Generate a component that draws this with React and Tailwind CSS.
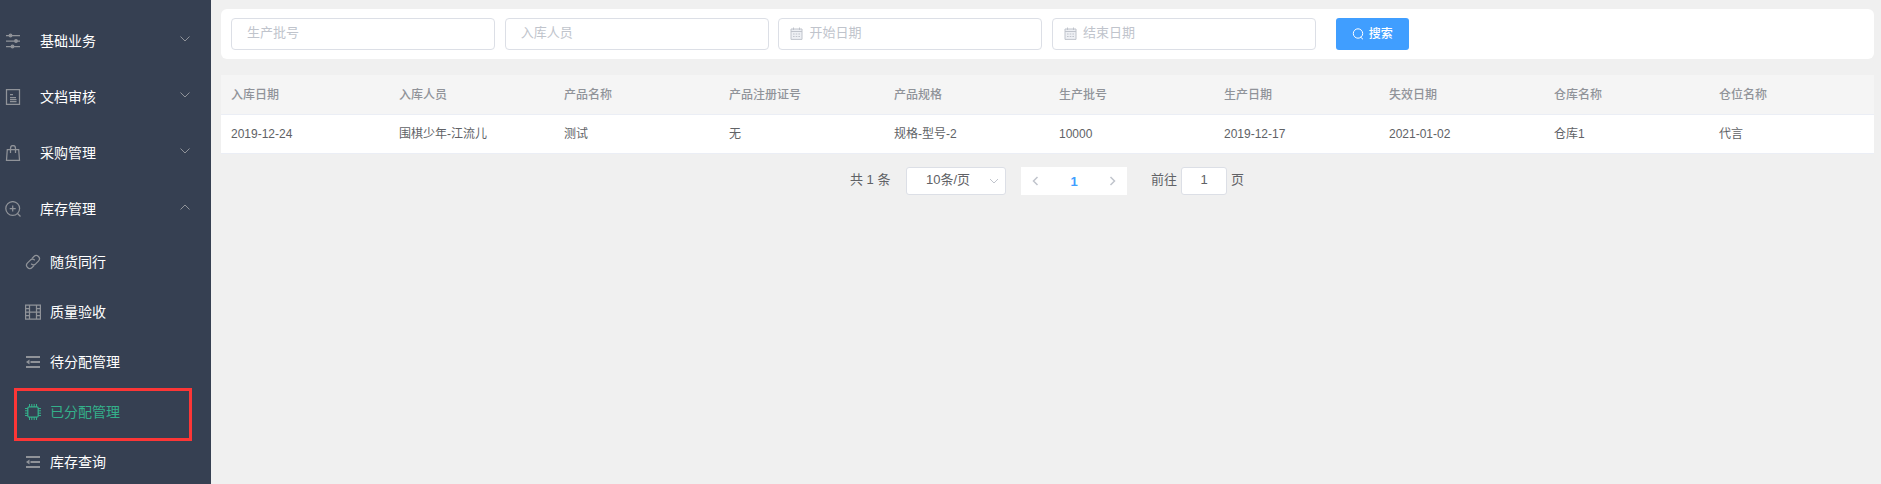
const FONT =
  "font-['Liberation_Sans','Noto_Sans_CJK_SC',sans-serif]";

const ICONS = {
  operation: (
    <>
      <path d="M1 2.500H15M1 8H15M1 13.500H15" />
      <circle cx="5.500" cy="2.500" r="1.300" fill="currentColor" />
      <circle cx="11" cy="8" r="1.300" fill="currentColor" />
      <circle cx="7.500" cy="13.500" r="1.300" fill="currentColor" />
    </>
  ),
  document: (
    <path d="M1.500 .6H14.500V15.400H1.500ZM5 5.500H8M5 8.500H11M5 10.500H11.500M5 12.500H11.500" />
  ),
  bag: (
    <path d="M2.300 4.500H13.700L14.500 15.300H1.500ZM5.500 8V3.500C5.500 -.4 10.500 -.4 10.500 3.500V8" />
  ),
  zoomIn: (
    <>
      <circle cx="7.700" cy="7.500" r="6.900" />
      <path d="M12.500 12.500L15.500 15.500M4.700 7.500H10.700M7.700 4.500V10.500" />
    </>
  ),
  link: (
    <g transform="rotate(-45 8 8)">
      <path d="M6.500 11.200H3.500A3.200 3.200 0 0 1 3.500 4.800H7.500A3.200 3.200 0 0 1 10.500 8" />
      <path d="M9.500 4.800H12.500A3.200 3.200 0 0 1 12.500 11.200H8.500A3.200 3.200 0 0 1 5.500 8" />
    </g>
  ),
  film: (
    <path d="M.6 1H15.400V15H.6ZM4.500 1V15M11.500 1V15M4.500 8H11.500M.5 4.500H4.500M.5 8H4.500M.5 11.500H4.500M11.500 4.500H15.500M11.500 8H15.500M11.500 11.500H15.500" />
  ),
  fold: (
    <>
      <path strokeWidth="2" d="M1 3H15M5.500 8H15M1 13H15" />
      <path d="M1 8L4.500 5.500V10.500Z" fill="currentColor" stroke="none" />
    </>
  ),
  cpu: (
    <>
      <rect x="2.800" y="2.800" width="10.400" height="10.400" rx="1.500" />
      <path
        strokeWidth="1"
        d="M4.500 0V3M6.800 0V3M9.200 0V3M11.500 0V3M4.500 13V16M6.800 13V16M9.200 13V16M11.500 13V16M0 4.500H3M0 6.800H3M0 9.200H3M0 11.500H3M13 4.500H16M13 6.800H16M13 9.200H16M13 11.500H16"
      />
    </>
  ),
};

function Icon({ name, className = "" }) {
  return (
    <svg viewBox="0 0 16 16" fill="none" stroke="currentColor" strokeWidth="1.250" className={`size-4 shrink-0 ${className}`}>
      {ICONS[name]}
    </svg>
  );
}

function Chevron({ d, className }) {
  return (
    <svg viewBox="0 0 12 12" fill="none" stroke="currentColor" className={`size-3 shrink-0 ${className}`}>
      <path d={d} />
    </svg>
  );
}

const GROUPS = [
  { icon: "operation", label: "基础业务" },
  { icon: "document", label: "文档审核" },
  { icon: "bag", label: "采购管理" },
  { icon: "zoomIn", label: "库存管理", open: true },
];

const ITEMS = [
  { icon: "link", label: "随货同行" },
  { icon: "film", label: "质量验收" },
  { icon: "fold", label: "待分配管理" },
  { icon: "cpu", label: "已分配管理", active: true },
  { icon: "fold", label: "库存查询" },
];

function Sidebar() {
  return (
    <aside className="relative w-[211px] shrink-0 overflow-hidden bg-[#364052] pt-[13px] text-sm text-white">
      {GROUPS.map((g) => (
        <div key={g.label} className="flex h-14 items-center pr-5 pl-[5px]">
          <Icon name={g.icon} className="mr-[19px] text-[#909399]" />
          <span className="grow pb-px">{g.label}</span>
          <Chevron d={g.open ? "M1.500 7.500L6 3L10.500 7.500" : "M1.500 2.500L6 7L10.500 2.500"} className="mb-[3px] text-[#909399]" />
        </div>
      ))}
      {ITEMS.map((it) => (
        <div key={it.label} className={`flex h-[50px] items-center pl-[25px] ${it.active ? "text-[#34b08a]" : ""}`}>
          <Icon name={it.icon} className={`mr-[9px] ${it.active ? "" : "text-[#909399]"}`} />
          <span className="pb-px">{it.label}</span>
        </div>
      ))}
      <div className="absolute top-[388px] left-[14px] h-[53px] w-[178px] border-3 border-[#fd3636]" />
    </aside>
  );
}

function Calendar() {
  return (
    <svg viewBox="0 0 13 13" fill="none" stroke="currentColor" className="mr-[6px] size-[13px] shrink-0">
      <path d="M1 2H12V12.400H1Z" fill="#eef0f4" />
      <path d="M1 4.500H12M3.500 .5V3M9.500 .5V3" />
      <path d="M3 7H10M3 9.500H10" strokeDasharray="1.600 1.100" />
    </svg>
  );
}

function Field({ label, date }) {
  return (
    <div className={`flex h-8 w-[264px] items-center rounded border border-[#dcdfe6] bg-white pb-[2px] text-[13px] text-[#c0c4cc] ${date ? "pl-[11px]" : "pl-[15px]"}`}>
      {date && <Calendar />}
      <span>{label}</span>
    </div>
  );
}

const COLUMNS = [
  ["入库日期", "2019-12-24"],
  ["入库人员", "围棋少年-江流儿"],
  ["产品名称", "测试"],
  ["产品注册证号", "无"],
  ["产品规格", "规格-型号-2"],
  ["生产批号", "10000"],
  ["生产日期", "2019-12-17"],
  ["失效日期", "2021-01-02"],
  ["仓库名称", "仓库1"],
  ["仓位名称", "代言"],
];

const GRID = "grid grid-cols-[168px_repeat(9,165px)] items-center";

export default function App() {
  return (
    <div className={`flex h-[484px] w-[1881px] overflow-hidden bg-[#f0f0f0] ${FONT}`}>
      <Sidebar />
      <main className="grow pt-[9px] pr-[7px] pl-[10px]">
        <div className="flex h-[50px] items-center gap-[9.7px] rounded-md bg-white pl-[10px]">
          <Field label="生产批号" />
          <Field label="入库人员" />
          <Field label="开始日期" date />
          <Field label="结束日期" date />
          <button className="ml-[10px] flex h-8 w-[73px] items-center justify-center gap-[5px] rounded-[3px] bg-[#409eff] text-xs font-medium text-white">
            <svg viewBox="0 0 12 12" fill="none" stroke="currentColor" className="size-3">
              <circle cx="6" cy="5.500" r="4.700" />
              <path d="M8.500 9L11 11.300" />
            </svg>
            搜索
          </button>
        </div>
        <div className="mt-4 text-xs">
          <div className={`h-10 border-b border-[#ebeef5] bg-[#f5f5f5] font-medium text-[#909399] ${GRID}`}>
            {COLUMNS.map(([h]) => (
              <div key={h} className="pl-[10px]">{h}</div>
            ))}
          </div>
          <div className={`h-[39px] border-b border-[#ebeef5] bg-white text-[#606266] ${GRID}`}>
            {COLUMNS.map(([h, v]) => (
              <div key={h} className="pl-[10px]">{v}</div>
            ))}
          </div>
        </div>
        <div className="mt-[13px] flex h-7 items-center pl-[629px] text-[13px] text-[#606266]">
          <span className="w-[56px] pb-[2px]">共 1 条</span>
          <div className="flex h-7 w-[100px] items-center rounded-[3px] border border-[#dcdfe6] bg-white pr-[5px] pl-[19px]">
            <span className="grow pb-[2px]">10条/页</span>
            <Chevron d="M2 4L6 8L10 4" className="text-[#c0c4cc]" />
          </div>
          <div className="ml-[15px] flex h-7 w-[106px] items-center justify-between bg-white px-[9px] text-[#c0c4cc]">
            <Chevron d="M7.500 2L3.500 6L7.500 10" className="stroke-[1.5]" />
            <span className="pt-px font-bold text-[#409eff]">1</span>
            <Chevron d="M4.500 2L8.500 6L4.500 10" className="stroke-[1.5]" />
          </div>
          <span className="ml-[24px] pb-[2px]">前往</span>
          <span className="mr-[4px] ml-[4px] flex h-7 w-[46px] items-center justify-center rounded-[3px] border border-[#dcdfe6] bg-white pb-[2px]">1</span>
          <span className="pb-[2px]">页</span>
        </div>
      </main>
    </div>
  );
}
